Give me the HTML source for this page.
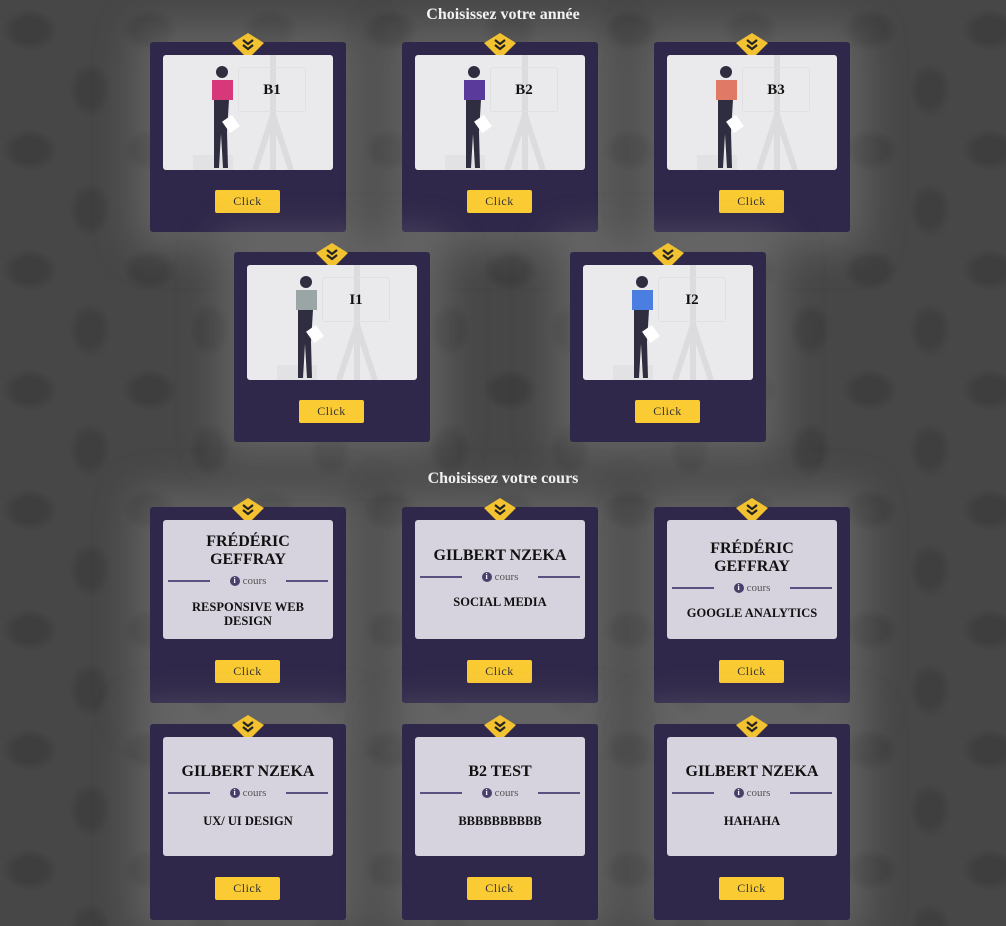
<!DOCTYPE html>
<html><head><meta charset="utf-8"><style>
*{margin:0;padding:0;box-sizing:border-box}
body{width:1006px;height:926px;overflow:hidden;font-family:"Liberation Serif",serif;
background:#474747;background-image:radial-gradient(ellipse 40px 30px at 30px 30px,#3e3e3e 40%,transparent 70%),radial-gradient(ellipse 30px 40px at 90px 90px,#3f3f3f 40%,transparent 70%);background-size:120px 120px;position:relative}
h2{position:absolute;left:0;width:1006px;text-align:center;color:#fff;font-size:16px;font-weight:bold}
.card{position:absolute;width:196px;height:190px;background:#30284a;border-radius:3px;box-shadow:0 0 40px 16px rgba(140,140,140,.4)}
.badge{position:absolute;left:82px;top:-9px;width:32px;height:26px}
.inner{position:absolute;left:13px;top:13px;width:170px;height:115px;background:#eaeaec;border-radius:3px;overflow:hidden}
.btn{position:absolute;left:65px;top:148px;width:65px;height:23px;background:#fbcb33;border-radius:2px;color:#333;font-size:12px;text-align:center;line-height:23px;letter-spacing:.5px}
.lbl{position:absolute;left:75px;top:12px;width:68px;height:45px;text-align:center;line-height:45px;font-size:15px;font-weight:bold;color:#111;border:1px solid #e0e0e2;border-radius:3px}
.c .inner{background:#d6d3de;height:119px;text-align:center;color:#111}
.c .btn{top:153px}
.nm{font-size:16px;font-weight:bold;line-height:18px}
.dv{display:flex;align-items:center;justify-content:center;margin:6px 5px 0;font-size:11px;color:#555;gap:6px}
.dv:before,.dv:after{content:"";flex:1;height:2px;background:#5b5080;margin:0 14px 0 0}
.dv:after{margin:0 0 0 14px}
.dv i{display:inline-block;width:10px;height:10px;border-radius:50%;background:#4a3f6b;color:#fff;font-size:8px;line-height:10px;font-style:normal;font-weight:bold;margin-right:-3px}
.sb{font-size:12.5px;font-weight:bold;line-height:14px;margin-top:12px}
</style></head><body>
<svg width="0" height="0" style="position:absolute"><defs>
<g id="bd"><polygon points="16,0 32,10 16,26 0,10" fill="#f2c230"/><path d="M11 7l5 4 5-4M11 12l5 4 5-4" stroke="#222" stroke-width="2.2" fill="none"/></g>
<g id="ill"><rect x="107" y="0" width="6" height="115" fill="#dcdcde"/><path d="M110 60L92 115M110 60L128 115" stroke="#dcdcde" stroke-width="6"/><rect x="30" y="100" width="40" height="15" fill="#e2e2e4"/><circle cx="59" cy="17" r="6" fill="#2f2e41"/><path d="M51 45h15l-2 32 1 36h-5l-2-34-2 34h-5z" fill="#2f2e41"/><rect x="62" y="62" width="12" height="14" fill="#fff" transform="rotate(-35 68 69)"/></g>
</defs></svg>
<h2 style="top:6px">Choisissez votre année</h2>
<h2 style="top:470px">Choisissez votre cours</h2>

<div class="card" style="left:150px;top:42px"><svg class="badge"><use href="#bd"/></svg><div class="inner">
<svg width="170" height="115" style="position:absolute;left:0;top:0"><use href="#ill"/><rect x="49" y="25" width="21" height="20" fill="#d6387a"/></svg>
<div class="lbl">B1</div></div><div class="btn">Click</div></div>

<div class="card" style="left:402px;top:42px"><svg class="badge"><use href="#bd"/></svg><div class="inner">
<svg width="170" height="115" style="position:absolute;left:0;top:0"><use href="#ill"/><rect x="49" y="25" width="21" height="20" fill="#5a3a9a"/></svg>
<div class="lbl">B2</div></div><div class="btn">Click</div></div>

<div class="card" style="left:654px;top:42px"><svg class="badge"><use href="#bd"/></svg><div class="inner">
<svg width="170" height="115" style="position:absolute;left:0;top:0"><use href="#ill"/><rect x="49" y="25" width="21" height="20" fill="#e07a66"/></svg>
<div class="lbl">B3</div></div><div class="btn">Click</div></div>

<div class="card" style="left:234px;top:252px"><svg class="badge"><use href="#bd"/></svg><div class="inner">
<svg width="170" height="115" style="position:absolute;left:0;top:0"><use href="#ill"/><rect x="49" y="25" width="21" height="20" fill="#9aa5a5"/></svg>
<div class="lbl">I1</div></div><div class="btn">Click</div></div>

<div class="card" style="left:570px;top:252px"><svg class="badge"><use href="#bd"/></svg><div class="inner">
<svg width="170" height="115" style="position:absolute;left:0;top:0"><use href="#ill"/><rect x="49" y="25" width="21" height="20" fill="#4a7ee0"/></svg>
<div class="lbl">I2</div></div><div class="btn">Click</div></div>

<div class="card c" style="left:150px;top:507px;height:196px"><svg class="badge"><use href="#bd"/></svg><div class="inner" style="padding-top:13px"><div class="nm">FRÉDÉRIC<br>GEFFRAY</div><div class="dv"><i>i</i>cours</div><div class="sb" style="margin-top:13px">RESPONSIVE WEB<br>DESIGN</div></div><div class="btn">Click</div></div>

<div class="card c" style="left:402px;top:507px;height:196px"><svg class="badge"><use href="#bd"/></svg><div class="inner" style="padding-top:27px"><div class="nm">GILBERT NZEKA</div><div class="dv"><i>i</i>cours</div><div class="sb">SOCIAL MEDIA</div></div><div class="btn">Click</div></div>

<div class="card c" style="left:654px;top:507px;height:196px"><svg class="badge"><use href="#bd"/></svg><div class="inner" style="padding-top:20px"><div class="nm">FRÉDÉRIC<br>GEFFRAY</div><div class="dv"><i>i</i>cours</div><div class="sb">GOOGLE ANALYTICS</div></div><div class="btn">Click</div></div>

<div class="card c" style="left:150px;top:724px;height:196px"><svg class="badge"><use href="#bd"/></svg><div class="inner" style="padding-top:26px"><div class="nm">GILBERT NZEKA</div><div class="dv"><i>i</i>cours</div><div class="sb" style="margin-top:15px">UX/ UI DESIGN</div></div><div class="btn">Click</div></div>

<div class="card c" style="left:402px;top:724px;height:196px"><svg class="badge"><use href="#bd"/></svg><div class="inner" style="padding-top:26px"><div class="nm">B2 TEST</div><div class="dv"><i>i</i>cours</div><div class="sb" style="margin-top:15px">BBBBBBBBBB</div></div><div class="btn">Click</div></div>

<div class="card c" style="left:654px;top:724px;height:196px"><svg class="badge"><use href="#bd"/></svg><div class="inner" style="padding-top:26px"><div class="nm">GILBERT NZEKA</div><div class="dv"><i>i</i>cours</div><div class="sb" style="margin-top:15px">HAHAHA</div></div><div class="btn">Click</div></div>
</body></html>
